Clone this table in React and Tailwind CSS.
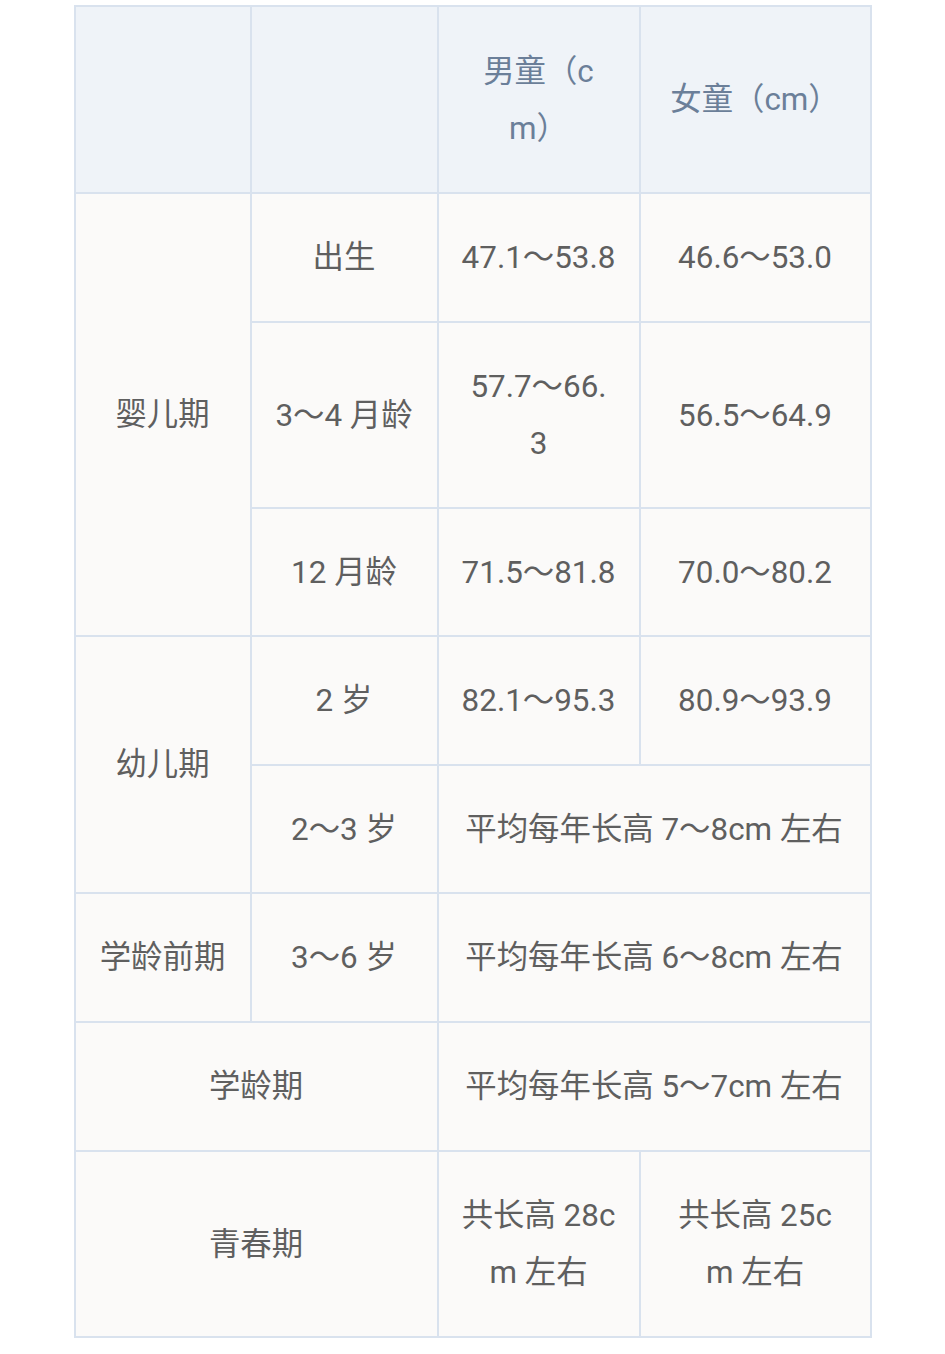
const FONT = { fontFamily: "Roboto, 'Noto Sans CJK SC', sans-serif" };

const rows = [
  { text: '', head: true },
  { text: '', head: true },
  { text: ['男童（c', 'm）'], head: true },
  { text: '女童（cm）', head: true },

  { text: '婴儿期', span: 'row-span-3' },
  { text: '出生' },
  { text: '47.1～53.8' },
  { text: '46.6～53.0' },

  { text: '3～4 月龄' },
  { text: ['57.7～66.', '3'] },
  { text: '56.5～64.9' },

  { text: '12 月龄' },
  { text: '71.5～81.8' },
  { text: '70.0～80.2' },

  { text: '幼儿期', span: 'row-span-2' },
  { text: '2 岁' },
  { text: '82.1～95.3' },
  { text: '80.9～93.9' },

  { text: '2～3 岁' },
  { text: '平均每年长高 7～8cm 左右', span: 'col-span-2' },

  { text: '学龄前期' },
  { text: '3～6 岁' },
  { text: '平均每年长高 6～8cm 左右', span: 'col-span-2' },

  { text: '学龄期', span: 'col-span-2' },
  { text: '平均每年长高 5～7cm 左右', span: 'col-span-2' },

  { text: '青春期', span: 'col-span-2' },
  { text: ['共长高 28c', 'm 左右'] },
  { text: ['共长高 25c', 'm 左右'] },
];

function Cell({ c }) {
  const lines = Array.isArray(c.text) ? c.text : [c.text];
  return (
    <div
      className={`flex flex-col items-center justify-center text-center border-r-2 border-b-2 border-[#d9e2ee] text-[31.4px] leading-[57px] whitespace-nowrap ${c.span || ''} ${c.head ? 'bg-[#eff3f8] text-[#6b7f99]' : 'bg-[#fbfaf9] text-[#5f5f5f]'}`}
    >
      {lines.map((l, i) => (
        <span key={i}>{l}</span>
      ))}
    </div>
  );
}

export default function App() {
  return (
    <div className="w-[945px] min-h-[1354px] bg-white pt-[5px]" style={FONT}>
      <div className="mx-auto w-[798px] grid grid-cols-[176px_187px_202px_231px] grid-rows-[187px_129px_186px_128px_129px_128px_129px_129px_186px] border-l-2 border-t-2 border-[#d9e2ee]">
        {rows.map((c, i) => (
          <Cell key={i} c={c} />
        ))}
      </div>
    </div>
  );
}
